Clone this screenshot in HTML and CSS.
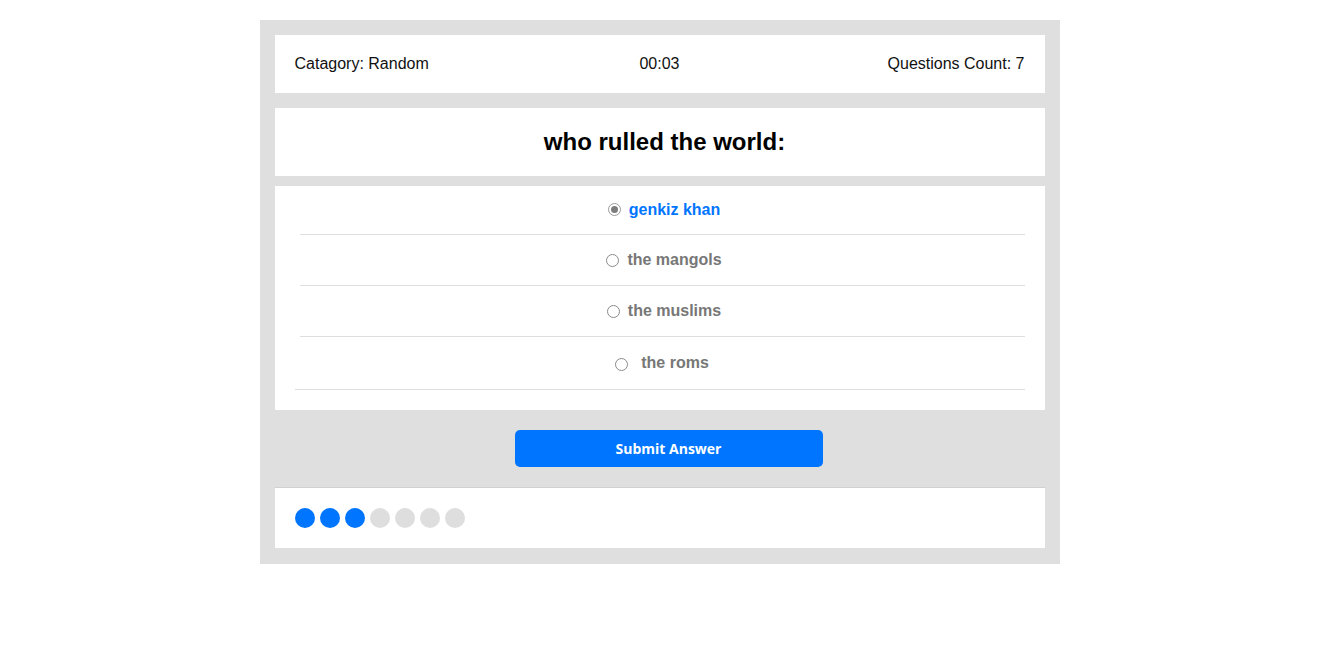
FILE: index.html
```html
<!DOCTYPE html>
<html>
<head>
<meta charset="utf-8">
<title>Quiz</title>
<link rel="stylesheet" href="styles.css">
</head>
<body>
<div class="quiz">
  <div class="info">
    <div class="category">Catagory: Random</div>
    <div class="timer">00:03</div>
    <div class="count">Questions Count: 7</div>
  </div>
  <div class="question"><h2>who rulled the world:</h2></div>
  <div class="answers">
    <div class="answer first inset">
      <span class="radio checked"></span><label class="selected">genkiz khan</label>
    </div>
    <div class="answer inset">
      <span class="radio"></span><label>the mangols</label>
    </div>
    <div class="answer inset">
      <span class="radio"></span><label>the muslims</label>
    </div>
    <div class="answer last">
      <span class="radio"></span><label class="wide">the roms</label>
    </div>
  </div>
  <div class="submit-wrap">
    <button class="submit">Submit Answer</button>
  </div>
  <div class="bullets">
    <span class="dot on"></span>
    <span class="dot on"></span>
    <span class="dot on"></span>
    <span class="dot"></span>
    <span class="dot"></span>
    <span class="dot"></span>
    <span class="dot"></span>
  </div>
</div>
</body>
</html>
```
FILE: styles.css
```css
* { box-sizing: border-box; }
body {
  margin: 0;
  padding-top: 20px;
  font-family: "Liberation Sans", Arial, sans-serif;
  background: #fff;
}
.quiz {
  width: 800px;
  margin: 0 auto;
  background: #dfdfdf;
  padding: 15px 15px 16px;
}
.info {
  background: #fff;
  height: 58px;
  padding: 0 20px;
  display: grid;
  grid-template-columns: 1fr auto 1fr;
  align-items: center;
  font-size: 16px;
  color: #111;
}
.info .count { text-align: right; }
.question {
  background: #fff;
  margin-top: 15px;
  height: 68px;
  padding-left: 10px;
  display: flex;
  align-items: center;
  justify-content: center;
}
.question h2 {
  margin: 0;
  font-size: 24px;
  font-weight: bold;
  color: #000;
}
.answers {
  background: #fff;
  margin-top: 10px;
  padding: 0 20px 20px 20px;
}
.answer {
  height: 51px;
  border-bottom: 1px solid #dedede;
  display: flex;
  align-items: center;
  justify-content: center;
  font-size: 16px;
  font-weight: bold;
  color: #777;
  padding-left: 4px;
}
.answer.inset { margin-left: 5px; }
.answer.first { height: 49px; }
.answer.last { height: 53px; padding-left: 5px; }
.answer label { margin-left: 8px; }
.answer label.wide { margin-left: 13px; }
.answer label.selected { color: #0075ff; }
.radio {
  width: 13px;
  height: 13px;
  border: 1px solid #8a8a8a;
  border-radius: 50%;
  display: inline-flex;
  align-items: center;
  justify-content: center;
  background: #fff;
}
.radio.checked { border-color: #9a9a9a; margin-top: -1px; }
.radio.checked::after {
  content: "";
  width: 7px;
  height: 7px;
  border-radius: 50%;
  background: #7c7c7c;
}
.answer.last .radio { margin-top: 2px; }
.submit-wrap {
  padding: 20px 0;
  display: flex;
  justify-content: center;
}
.submit {
  width: 308px;
  height: 37px;
  margin-left: 18px;
  border: none;
  border-radius: 5px;
  background: #0075ff;
  color: #fff;
  font-family: "Open Sans", sans-serif;
  font-weight: bold;
  font-size: 14px;
  cursor: pointer;
}
.bullets {
  background: #fff;
  border-top: 1px solid #d0d0d0;
  padding: 20px;
  display: flex;
  gap: 5px;
}
.dot {
  width: 20px;
  height: 20px;
  border-radius: 50%;
  background: #dedede;
}
.dot.on { background: #0075ff; }
```
